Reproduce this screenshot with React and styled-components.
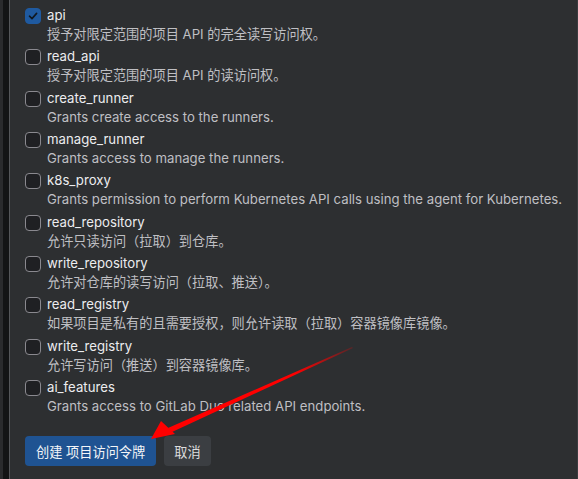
import React from 'react';
import styled, { createGlobalStyle } from 'styled-components';

const GlobalStyle = createGlobalStyle`
  html, body {
    margin: 0;
    padding: 0;
    background: #2d2f31;
  }
  body {
    font-family: Inter, "Noto Sans CJK SC", sans-serif;
    -webkit-font-smoothing: antialiased;
  }
`;

const scopes = [
  { name: 'api', desc: '授予对限定范围的项目 API 的完全读写访问权。', checked: true },
  { name: 'read_api', desc: '授予对限定范围的项目 API 的读访问权。' },
  { name: 'create_runner', desc: 'Grants create access to the runners.' },
  { name: 'manage_runner', desc: 'Grants access to manage the runners.' },
  { name: 'k8s_proxy', desc: 'Grants permission to perform Kubernetes API calls using the agent for Kubernetes.' },
  { name: 'read_repository', desc: '允许只读访问（拉取）到仓库。' },
  { name: 'write_repository', desc: '允许对仓库的读写访问（拉取、推送）。' },
  { name: 'read_registry', desc: '如果项目是私有的且需要授权，则允许读取（拉取）容器镜像库镜像。' },
  { name: 'write_registry', desc: '允许写访问（推送）到容器镜像库。' },
  { name: 'ai_features', desc: 'Grants access to GitLab Duo related API endpoints.' },
];

const Page = styled.div`
  position: relative;
  display: flex;
  width: 578px;
  height: 479px;
  overflow: hidden;
`;

const Gutter = styled.div`
  width: 3px;
  background: #2a2b2d;
  border-right: 6px solid #131415;
`;

const Panel = styled.div`
  flex: 1;
  border-left: 1px solid #55575a;
  border-right: 1px solid #3a3c3f;
  padding: 5px 0 0 15px;
  display: flex;
  flex-direction: column;
`;

const ScopeList = styled.div`
  display: flex;
  flex-direction: column;
`;

const ScopeRow = styled.label`
  display: flex;
  align-items: flex-start;
  gap: 6px;
  height: 41.33px;
`;

const Box = styled.span`
  box-sizing: border-box;
  flex: none;
  width: 16px;
  height: 16px;
  margin-top: 3px;
  border-radius: 4px;
  border: 1px solid ${p => (p.$checked ? '#1f5aa0' : '#8a898f')};
  background: ${p => (p.$checked ? '#1f5aa0' : '#1f2023')};
  display: flex;
  align-items: center;
  justify-content: center;
`;

const ScopeText = styled.div`
  display: flex;
  flex-direction: column;
`;

const ScopeName = styled.span`
  color: #ececef;
  font-size: 13.2px;
  line-height: 20px;
`;

const ScopeDesc = styled.span`
  color: #bfbfc3;
  font-size: 13.2px;
  line-height: 19px;
  white-space: nowrap;
`;

const Actions = styled.div`
  display: flex;
  gap: 8px;
  margin-top: 18px;
`;

const Button = styled.button`
  font-family: Inter, "Noto Sans CJK SC", sans-serif;
  font-size: 13.2px;
  height: 30px;
  padding: 0 ${p => (p.$primary ? '11px' : '10px')};
  border: none;
  border-radius: 4px;
  color: ${p => (p.$primary ? '#f3f5f8' : '#dcdcde')};
  background: ${p => (p.$primary ? '#1f5392' : '#3b3e42')};
`;

const Overlay = styled.svg`
  position: absolute;
  left: 0;
  top: 0;
  pointer-events: none;
`;

function Check() {
  return (
    <svg width="12" height="12" viewBox="0 0 12 12">
      <path d="M2.5 6.2 L5 8.6 L9.6 3.4" fill="none" stroke="#101820" strokeWidth="1.6" strokeLinecap="round" strokeLinejoin="round" />
    </svg>
  );
}

export default function App() {
  return (
    <>
      <GlobalStyle />
      <Page>
        <Gutter />
        <Panel>
          <ScopeList>
            {scopes.map(s => (
              <ScopeRow key={s.name}>
                <Box $checked={s.checked}>{s.checked && <Check />}</Box>
                <ScopeText>
                  <ScopeName>{s.name}</ScopeName>
                  <ScopeDesc>{s.desc}</ScopeDesc>
                </ScopeText>
              </ScopeRow>
            ))}
          </ScopeList>
          <Actions>
            <Button $primary>创建 项目访问令牌</Button>
            <Button>取消</Button>
          </Actions>
        </Panel>
        <Overlay width="578" height="479" viewBox="0 0 578 479">
          <defs>
            <linearGradient id="fade" x1="352" y1="347" x2="160" y2="435" gradientUnits="userSpaceOnUse">
              <stop offset="0" stopColor="#ff0000" stopOpacity="0.2" />
              <stop offset="0.3" stopColor="#ff0000" />
              <stop offset="1" stopColor="#ff0000" />
            </linearGradient>
          </defs>
          <polygon points="352,347 353,348 172,432 168,428" fill="url(#fade)" />
          <polygon points="151,439 161,421 175,434" fill="#ff0000" />
        </Overlay>
      </Page>
    </>
  );
}
